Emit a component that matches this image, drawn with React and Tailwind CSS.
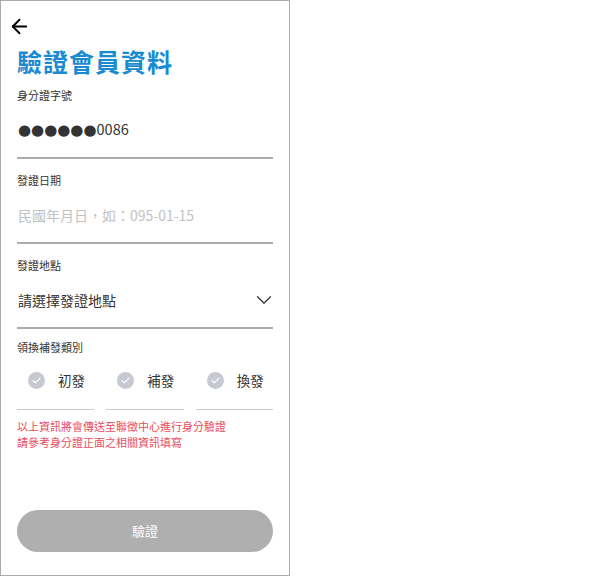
import React from 'react';
import { ArrowLeft, ChevronDown } from 'lucide-react';

const font = { fontFamily: '"Noto Sans CJK TC", "Liberation Sans", sans-serif' };

function Field({ label, children }) {
  return (
    <div className="mr-[16px]">
      <div className="text-[11px] leading-[16px] h-[16px] text-[#333]">{label}</div>
      <div className="h-[56px] flex items-center border-b-2 border-[#acacac]">{children}</div>
    </div>
  );
}

function Option({ label }) {
  return (
    <div className="flex-1 h-[55px] pt-[17px] flex items-start border-b border-[#cacaca]">
      <span className="ml-[11px] w-[17px] h-[17px] rounded-full bg-[#c6c9d2] flex items-center justify-center">
        <svg width="9" height="7" viewBox="0 0 9 7" fill="none">
          <path d="M1 3.6 L3.4 5.8 L8 1.2" stroke="#fff" strokeWidth="1.2" strokeLinecap="round" strokeLinejoin="round" />
        </svg>
      </span>
      <span className="ml-[13px] text-[13.5px] leading-[17px] text-[#333]">{label}</span>
    </div>
  );
}

export default function App() {
  const options = ['初發', '補發', '換發'];

  return (
    <div className="w-[290px] h-[576px] border border-[#ababab] bg-white flex flex-col" style={font}>
      {/* Back */}
      <div className="pl-[7px] pt-[14px] h-[42px]">
        <ArrowLeft className="w-[23px] h-[23px] text-black" strokeWidth={2} />
      </div>

      <div className="pl-[16px] flex flex-col">
        <h1 className="text-[25px] leading-[36px] font-bold text-[#1a8ad2] tracking-[1px]">驗證會員資料</h1>

        <div className="mt-[8px] flex flex-col gap-[13px]">
          <Field label="身分證字號">
            <span className="text-[14.5px] text-[#333] pl-[1px]">
              <span className="text-[15px]" style={{ fontFamily: '"DejaVu Sans", sans-serif' }}>●●●●●●</span>
              0086
            </span>
          </Field>
          <Field label="發證日期">
            <span className="text-[14px] text-[#c2c2c2] pl-[1px]">民國年月日，如：095-01-15</span>
          </Field>
          <Field label="發證地點">
            <span className="text-[14px] text-[#333] pl-[1px] flex-1">請選擇發證地點</span>
            <ChevronDown className="w-[26px] h-[26px] text-[#333] -mr-[4px]" strokeWidth={1.1} />
          </Field>
        </div>

        <div className="mt-[10px] mr-[16px]">
          <div className="text-[11px] leading-[16px] text-[#333]">領換補發類別</div>
          <div className="flex gap-[12px]">
            {options.map((o) => (
              <Option key={o} label={o} />
            ))}
          </div>
        </div>

        <div className="mt-[8px] text-[11px] leading-[16px] text-[#ea4b5e]">
          <div>以上資訊將會傳送至聯徵中心進行身分驗證</div>
          <div>請參考身分證正面之相關資訊填寫</div>
        </div>
      </div>

      <div className="mt-auto mb-[23px] px-[16px]">
        <button className="w-full h-[42px] rounded-full bg-[#afafaf] text-white text-[13px]">驗證</button>
      </div>
    </div>
  );
}
